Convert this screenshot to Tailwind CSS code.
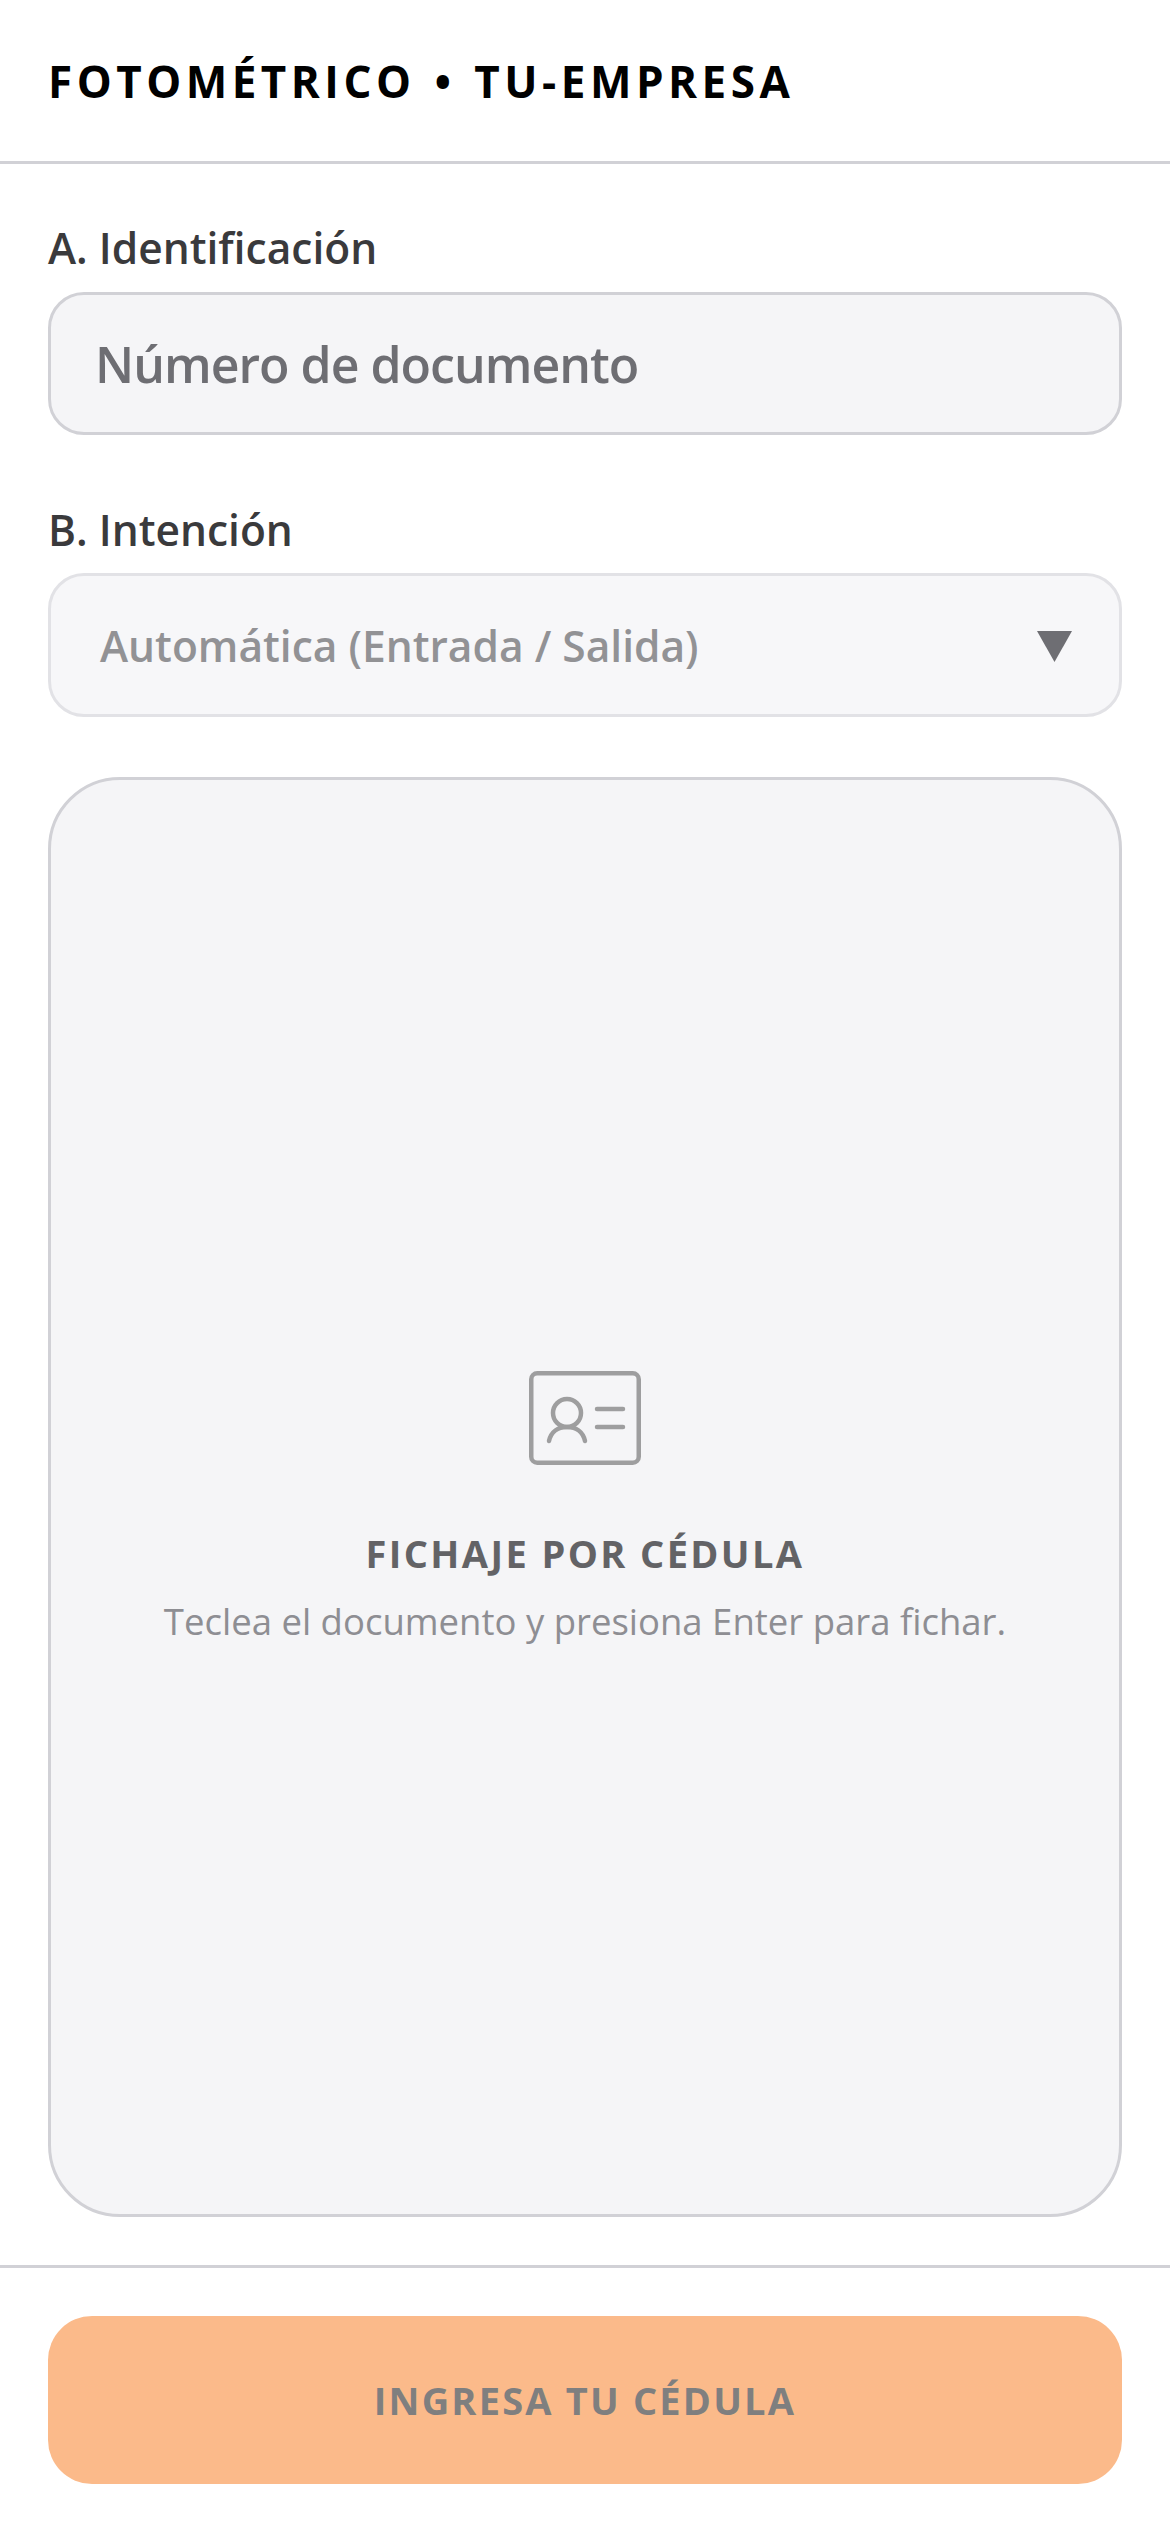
<!DOCTYPE html>
<html lang="es">
  <head>
    <meta charset="UTF-8" />
    <title>Fotométrico</title>
    <script src="https://cdn.jsdelivr.net/npm/@tailwindcss/browser@4"></script>
  </head>
  <body class="bg-white font-['Open_Sans',sans-serif]">
    <div class="flex h-[2532px] w-[1170px] flex-col">
      <!-- Header -->
      <header class="flex h-[164px] items-center border-b-3 border-[#d1d1d6] px-[48px]">
        <h1 class="text-[44px] font-bold tracking-[4.5px] [word-spacing:3px] text-black">FOTOMÉTRICO • TU-EMPRESA</h1>
      </header>

      <main class="flex flex-1 flex-col px-[48px] pt-[56px] pb-[48px]">
        <!-- A -->
        <label class="mb-[16px] text-[42.5px] leading-[56px] font-semibold text-[#3a3a3c]">A. Identificación</label>
        <div class="flex h-[143px] items-center rounded-[36px] border-3 border-[#d1d1d6] bg-[#f5f5f7] px-[44px]">
          <span class="mt-[2px] text-[50px] font-semibold tracking-[-1px] text-[#6e6e73]">Número de documento</span>
        </div>

        <!-- B -->
        <label class="mt-[67px] mb-[15px] text-[42.5px] leading-[56px] font-semibold text-[#3a3a3c]">B. Intención</label>
        <div class="flex h-[144px] items-center justify-between rounded-[36px] border-3 border-[#e2e2e6] bg-[#f7f7f9] pr-[47px] pl-[49px]">
          <span class="mt-[2px] text-[42.5px] font-semibold text-[#929295]">Automática (Entrada / Salida)</span>
          <svg class="mt-[3px] h-[31px] w-[35px]" viewBox="0 0 35 31"><path d="M0 0h35L17.5 31z" fill="#6e6e73" /></svg>
        </div>

        <!-- Panel -->
        <section class="mt-[60px] flex flex-1 flex-col items-center justify-center rounded-[72px] border-3 border-[#d1d1d6] bg-[#f5f5f7] pt-[25px]">
          <svg class="mb-[60px] h-[94px] w-[112px]" viewBox="0 0 112 94" fill="none" stroke="#9e9e9f" stroke-width="4.5" stroke-linecap="round">
            <rect x="2.25" y="2.25" width="107.5" height="89.5" rx="6" />
            <circle cx="38" cy="42" r="14" />
            <path d="M20 70c2-9 9-14 18-14s16 5 18 14" />
            <path d="M68 38h26M68 56h26" />
          </svg>
          <h2 class="text-[38px] font-bold tracking-[2.4px] text-[#636366]">FICHAJE POR CÉDULA</h2>
          <p class="mt-[12px] text-[36.5px] text-[#8e8e93]">Teclea el documento y presiona Enter para fichar.</p>
        </section>
      </main>

      <!-- Footer -->
      <footer class="border-t-3 border-[#d1d1d6] px-[48px] pt-[48px] pb-[48px]">
        <div class="flex h-[168px] items-center justify-center rounded-[44px] bg-[#fbba8a]">
          <span class="text-[38px] font-bold tracking-[2.2px] text-[#7f7f7f]">INGRESA TU CÉDULA</span>
        </div>
      </footer>
    </div>
  </body>
</html>
